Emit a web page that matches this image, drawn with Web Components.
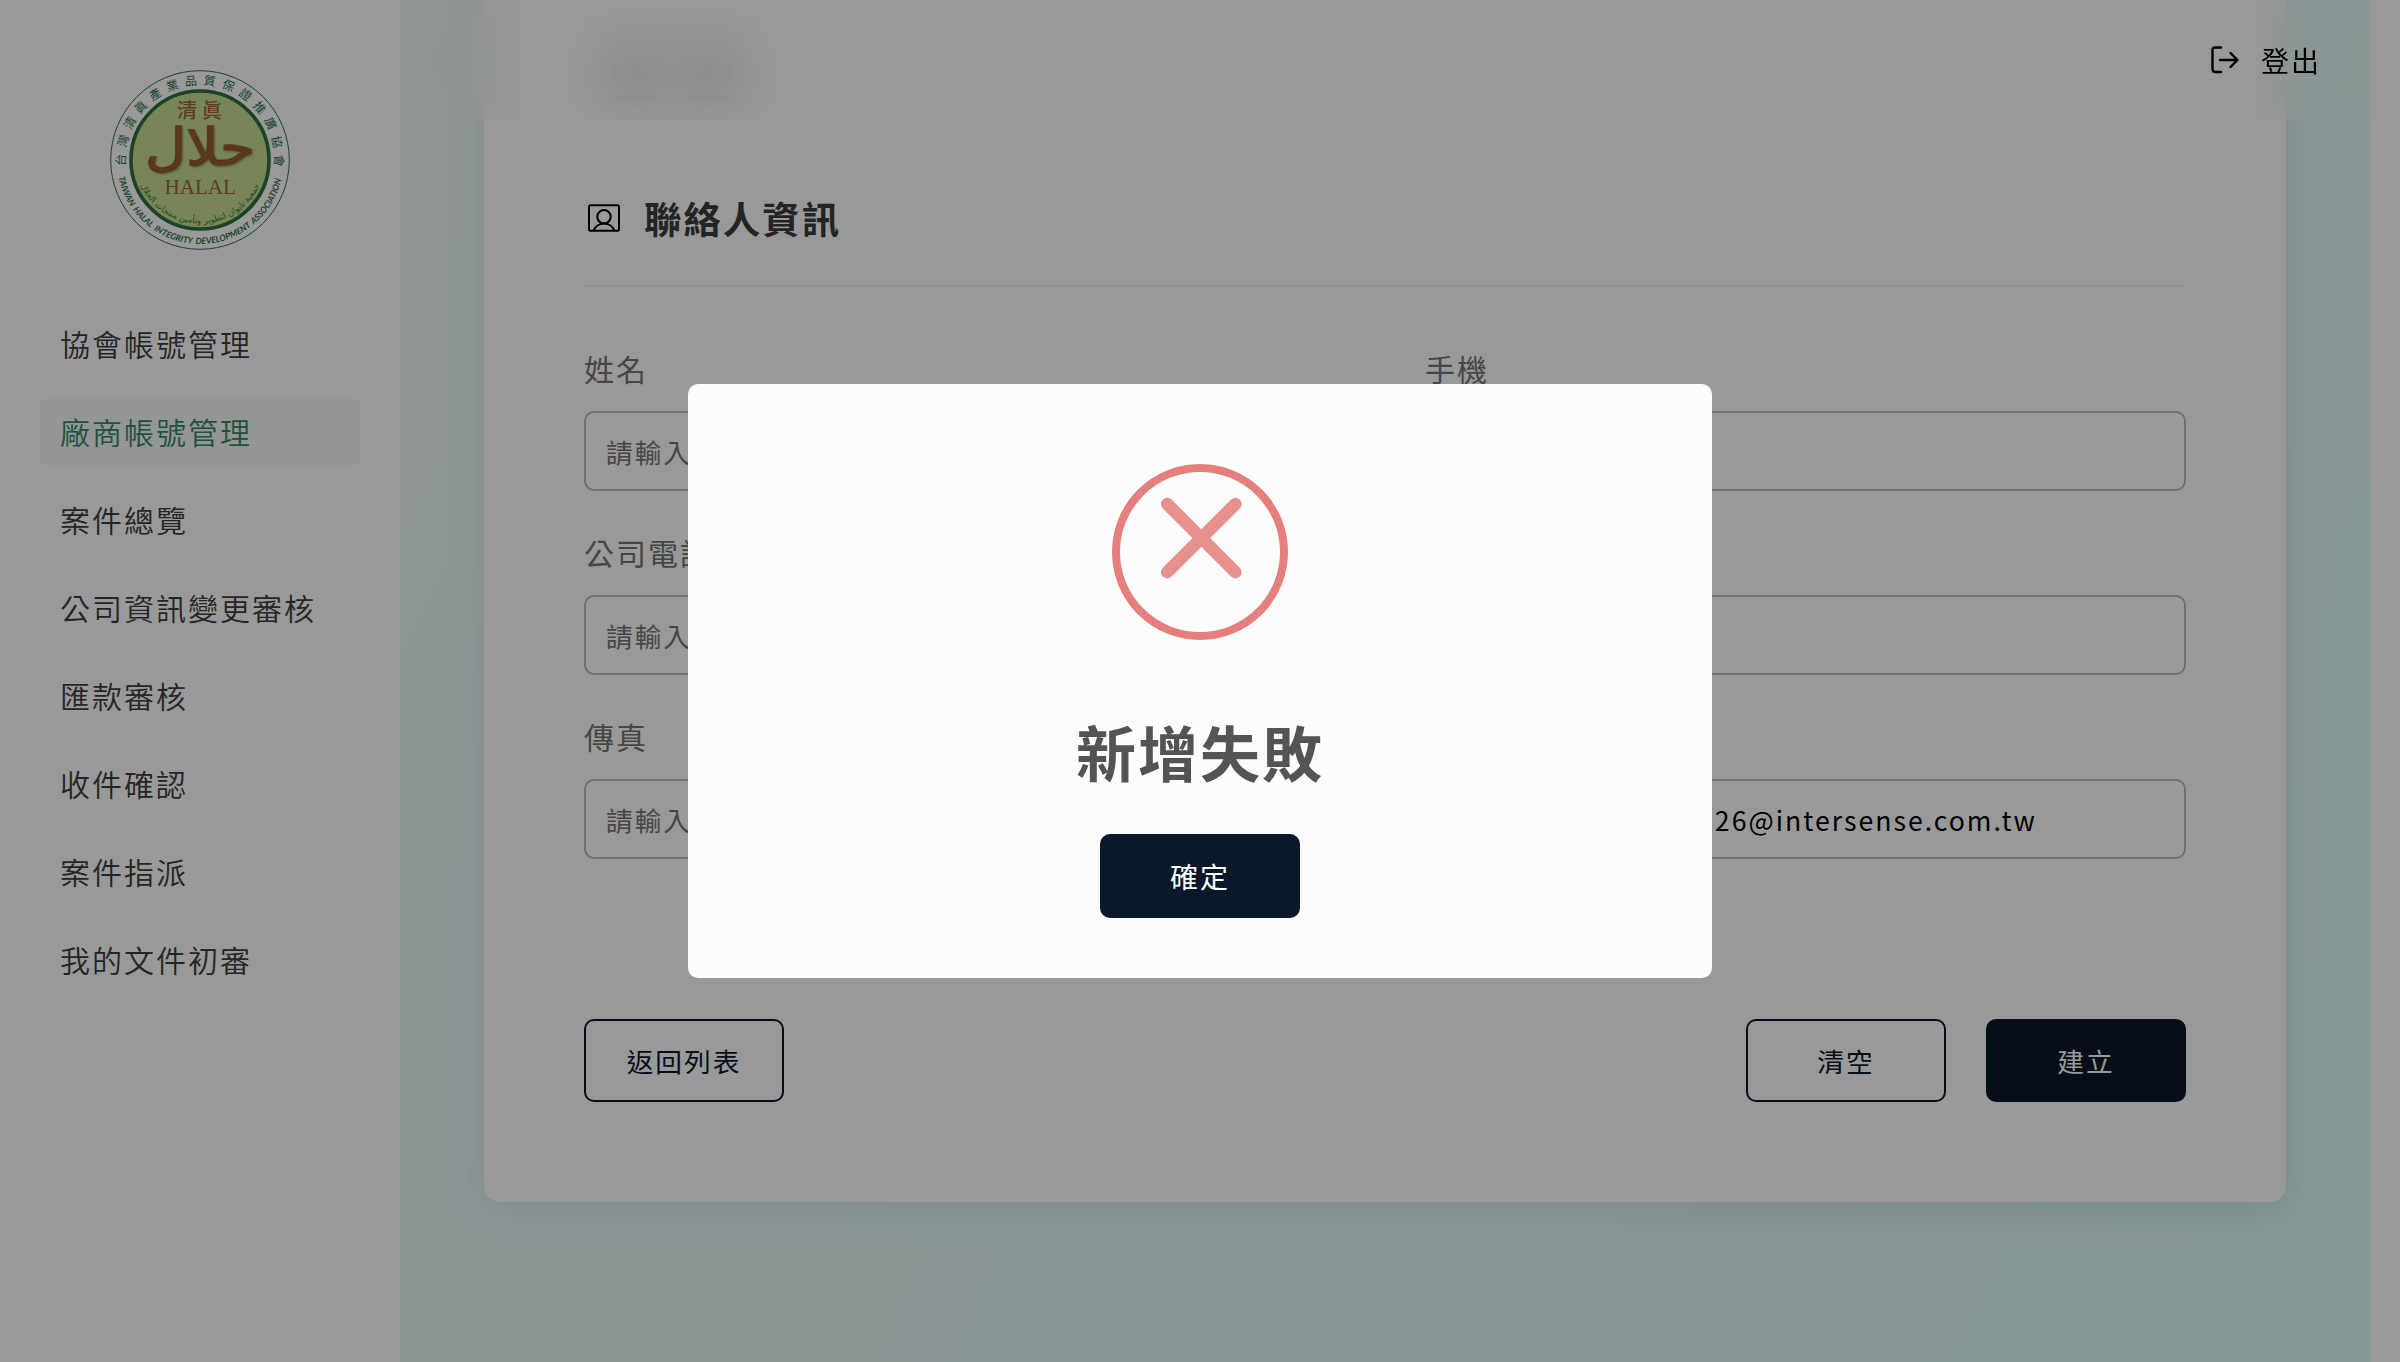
<!DOCTYPE html>
<html lang="zh-Hant">
<head>
<meta charset="utf-8">
<title>廠商帳號管理</title>
<style>
html,body{margin:0;height:100%;overflow:hidden}
body{font-family:"Noto Sans CJK TC",sans-serif;font-size:30px;letter-spacing:2px;color:#3c3c3c;background:#fff}
</style>
</head>
<body>
<admin-app></admin-app>
<script>
const define=(name,html)=>customElements.define(name,class extends HTMLElement{
  connectedCallback(){
    if(this.shadowRoot)return;
    const t=document.createElement('template');
    t.innerHTML=typeof html==='function'?html(this):html;
    this.attachShadow({mode:'open'}).append(t.content.cloneNode(true));
  }
});

define('halal-logo',`
<style>:host{display:block;width:180px;height:180px}svg{display:block;overflow:visible;letter-spacing:0}</style>
<svg width="180" height="180" viewBox="0 0 180 180">
  <defs>
    <path id="top" d="M15.8 96A74.5 74.5 0 1 1 164.2 96"/>
    <path id="bottom" d="M8.6 107.2A83.200 83.200 0 0 0 172.4 103.500"/>
    <path id="inner" d="M24.5 88A65.5 65.5 0 0 0 155.5 88"/>
  </defs>
  <circle cx="90" cy="90" r="89.3" fill="none" stroke="#28713f" stroke-width="1"/>
  <circle cx="90" cy="90" r="69" fill="#c9de94" stroke="#28713f" stroke-width="3.6"/>
  <text font-family="'Noto Sans CJK TC',sans-serif" font-size="12" fill="#28713f" letter-spacing="6.1"><textPath href="#top">台灣清眞產業品質保證推廣協會</textPath></text>
  <text font-family="Lato,sans-serif" font-weight="700" font-style="italic" font-size="8.6" word-spacing="1.5" fill="#28713f"><textPath href="#bottom" textLength="226">TAIWAN HALAL INTEGRITY DEVELOPMENT ASSOCIATION</textPath></text>
  <text font-family="'DejaVu Sans',sans-serif" font-size="8.5" fill="#3c7a3c" text-anchor="middle"><textPath href="#inner" startOffset="50%">جمعية تايوان لتطوير وتأمين منتجات الحلال</textPath></text>
  <text x="67" y="47.5" font-family="'Noto Sans CJK TC',sans-serif" font-weight="500" font-size="20" letter-spacing="5" fill="#9d643b">清眞</text>
  <text x="90" y="94.5" font-family="'DejaVu Sans',sans-serif" font-size="51" text-anchor="middle" textLength="110" lengthAdjust="spacingAndGlyphs" fill="#965c36" stroke="#965c36" stroke-width="1.5" style="filter:drop-shadow(1px 1px 1px #0005)">حلال</text>
  <text x="54.5" y="123.7" font-family="'Liberation Serif',serif" font-size="20.5" textLength="71.5" lengthAdjust="spacingAndGlyphs" fill="#9d643b">HALAL</text>
</svg>`);

define('nav-item',`
<style>
:host{display:flex;align-items:center;box-sizing:border-box;height:68px;margin:0 40px;padding:0 20px 1px;border-radius:8px;font-size:30px;font-weight:350;line-height:67px;color:#3c3e3d;white-space:nowrap}
:host([active]){background:#f5faf8;color:#378868}
</style><slot></slot>`);

define('side-bar',`
<style>
:host{display:flex;flex-direction:column;flex:0 0 400px;background:#fff}
halal-logo{align-self:center;margin:70px 0 60px}
nav{display:flex;flex-direction:column;gap:20px}
</style>
<halal-logo></halal-logo>
<nav><nav-item>協會帳號管理</nav-item><nav-item active>廠商帳號管理</nav-item><nav-item>案件總覽</nav-item><nav-item>公司資訊變更審核</nav-item><nav-item>匯款審核</nav-item><nav-item>收件確認</nav-item><nav-item>案件指派</nav-item><nav-item>我的文件初審</nav-item></nav>`);

define('top-bar',`
<style>
:host{position:absolute;top:0;left:400px;right:30px;height:120px;box-sizing:border-box;display:flex;align-items:center;justify-content:flex-end;padding-right:49px;gap:22px;background:rgba(250,252,251,.15);backdrop-filter:blur(20px);-webkit-backdrop-filter:blur(20px);color:#000;font-size:28px;line-height:40px}
svg{display:block}
</style>
<svg width="28" height="28" viewBox="0 0 28 28" fill="none" stroke="#000" stroke-width="2.4" stroke-linecap="round" stroke-linejoin="round"><path d="M10 1.5H4.5Q1.5 1.5 1.5 4.5V23Q1.5 26 4.5 26H10M9 14H26M19.5 7l7 7-7 7"/></svg>
<slot></slot>`);

define('section-title',`
<style>
:host{display:flex;align-items:center;gap:24px;height:56px;padding-left:4px;font-size:37.44px;font-weight:700;line-height:56px;color:#3b3d3c}
svg{display:block}
</style>
<svg width="32" height="28" viewBox="0 0 32 28" fill="none" stroke="#000" stroke-width="2"><rect x="1" y="1.3" width="30" height="25.4" rx="1.5"/><circle cx="16" cy="12.8" r="6.700"/><path d="M5.500 26.5C8 21.500 11.500 19.500 16 19.500S24 21.500 26.500 26.5"/></svg>
<slot></slot>`);

define('form-field',el=>`
<style>
:host{display:flex;flex-direction:column;gap:22px}
label{height:41px;font-size:30px;line-height:41px;font-weight:400;color:#707874}
div{height:80px;box-sizing:border-box;border:2px solid #b9b9b9;border-radius:10px;padding:1px 20px 0;display:flex;align-items:center;font-size:26.67px;line-height:40px;color:#757575}
.v{color:#000;justify-content:flex-end;padding-right:147px}
</style>
<label>${el.getAttribute('label')||''}</label>
<div class="${el.hasAttribute('value')?'v':''}">${el.getAttribute('value')||el.getAttribute('placeholder')||''}</div>`);

define('app-button',`
<style>
:host{display:flex;align-items:center;justify-content:center;box-sizing:border-box;width:200px;height:83px;border:2px solid #0b182a;border-radius:10px;font-size:26.67px;line-height:40px;color:#0b182a}
:host([primary]){background:#0b182a;color:#fff}
</style><slot></slot>`);

define('contact-card',`
<style>
:host{display:flex;flex-direction:column;box-sizing:border-box;margin:-100px 84px 0;height:1302px;padding:100px;background:#fff;border-radius:16px;box-shadow:0 8px 40px rgba(20,40,50,.11)}
.prev{height:120px;display:flex;gap:8px;padding:44px 0 0 20px;box-sizing:border-box}
.prev i{width:64px;height:58px;background:#e2e2e2;border-radius:24px}
section-title{margin-top:70px}
hr{margin:39px 0 0;border:0;height:2px;background:#f0f0f0}
.grid{display:grid;grid-template-columns:1fr 1fr;column-gap:80px;row-gap:41px;margin-top:61px}
.actions{display:flex;gap:40px;margin-top:160px}
.actions app-button:first-child{margin-right:auto}
</style>
<div class="prev"><i></i><i></i></div>
<section-title>聯絡人資訊</section-title>
<hr>
<div class="grid">
<form-field label="姓名" placeholder="請輸入"></form-field><form-field label="手機"></form-field>
<form-field label="公司電話" placeholder="請輸入"></form-field><form-field></form-field>
<form-field label="傳真" placeholder="請輸入"></form-field><form-field value="26@intersense.com.tw"></form-field>
</div>
<div class="actions"><app-button>返回列表</app-button><app-button>清空</app-button><app-button primary>建立</app-button></div>`);

define('alert-dialog',`
<style>
:host{position:absolute;inset:0;display:flex;align-items:center;justify-content:center;background:rgba(0,0,0,.4)}
.box{width:1024px;height:594px;border-radius:10px;background:#fcfcfc;display:flex;flex-direction:column;align-items:center}
svg{display:block;margin-top:80px}
h2{margin:67px 0 0;font-size:60px;line-height:88px;font-weight:600;color:#545454}
app-button{margin-top:39px;height:84px;font-size:28px}
</style>
<div class="box">
<svg width="176" height="176" viewBox="0 0 176 176" fill="none"><circle cx="88" cy="88" r="84" stroke="#e47f7d" stroke-width="8"/><path d="M55.200 40L123.400 108.200M123.400 40L55.200 108.200" stroke="#e6918e" stroke-width="12.5" stroke-linecap="round"/></svg>
<h2>新增失敗</h2>
<app-button primary>確定</app-button>
</div>`);

define('admin-app',`
<style>
:host{position:relative;display:flex;width:2400px;height:1362px;overflow:hidden;background:#fff}
main{flex:1;overflow:hidden;background:linear-gradient(115deg,#f2fcfb 0%,#ecfcfb 25%,#e4fcfa 70%,#e0fcf9 100%)}
.track{flex:0 0 30px;background:#fff}
</style>
<side-bar></side-bar>
<main><contact-card></contact-card></main>
<div class="track"></div>
<top-bar>登出</top-bar>
<alert-dialog></alert-dialog>`);
</script>
</body>
</html>
